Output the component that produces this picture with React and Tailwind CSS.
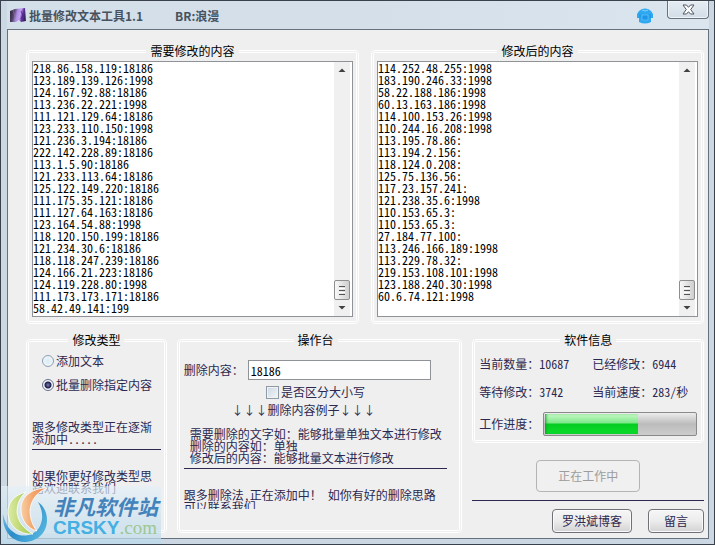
import React, { useState } from 'react';

const sourceLines = [
  '218.86.158.119:18186',
  '123.189.139.126:1998',
  '124.167.92.88:18186',
  '113.236.22.221:1998',
  '111.121.129.64:18186',
  '123.233.110.150:1998',
  '121.236.3.194:18186',
  '222.142.228.89:18186',
  '113.1.5.90:18186',
  '121.233.113.64:18186',
  '125.122.149.220:18186',
  '111.175.35.121:18186',
  '111.127.64.163:18186',
  '123.164.54.88:1998',
  '118.120.150.199:18186',
  '121.234.30.6:18186',
  '118.118.247.239:18186',
  '124.166.21.223:18186',
  '124.119.228.80:1998',
  '111.173.173.171:18186',
  '58.42.49.141:199',
];

const resultLines = [
  '114.252.48.255:1998',
  '183.190.246.33:1998',
  '58.22.188.186:1998',
  '60.13.163.186:1998',
  '114.100.153.26:1998',
  '110.244.16.208:1998',
  '113.195.78.86:',
  '113.194.2.156:',
  '118.124.0.208:',
  '125.75.136.56:',
  '117.23.157.241:',
  '121.238.35.6:1998',
  '110.153.65.3:',
  '110.153.65.3:',
  '27.184.77.100:',
  '113.246.166.189:1998',
  '113.229.78.32:',
  '219.153.108.101:1998',
  '123.188.240.30:1998',
  '60.6.74.121:1998',
];

const GroupBox = ({ title, className = '', children }) => (
  <fieldset className={`min-w-0 rounded-sm border-3 border-double border-white ${className}`}>
    <legend className="mx-auto px-1 leading-4 text-black">{title}</legend>
    {children}
  </fieldset>
);

const ScrollBar = () => (
  <div className="flex w-4 flex-col items-center bg-[#f0f0f0]">
    <svg className="h-4 w-4" viewBox="0 0 16 16">
      <path d="M4.5 10 8 6.5 11.5 10Z" fill="#404040" />
    </svg>
    <div className="flex-1" />
    <div className="flex h-5 w-4 flex-col items-center justify-center gap-px rounded-xs border border-[#8e8e8e] bg-linear-to-r from-[#f8f8f8] to-[#cfcfcf]">
      <span className="h-px w-1.5 bg-[#555]" />
      <span className="h-px w-1.5 bg-white" />
      <span className="h-px w-1.5 bg-[#555]" />
      <span className="h-px w-1.5 bg-white" />
      <span className="h-px w-1.5 bg-[#555]" />
    </div>
    <svg className="h-4 w-4" viewBox="0 0 16 16">
      <path d="M4.5 6 8 9.5 11.5 6Z" fill="#404040" />
    </svg>
  </div>
);

const TextPane = ({ title, lines }) => {
  const [text, setText] = useState(lines.join('\n'));

  return (
    <GroupBox title={title} className="px-[3px] pt-0.5 pb-1">
      <div className="flex h-64 border border-[#8f9296] bg-white pr-0.5">
        <textarea
          aria-label={title}
          value={text}
          onChange={(e) => setText(e.target.value)}
          spellCheck={false}
          className="min-w-0 flex-1 resize-none overflow-hidden leading-3 text-black outline-none"
        />
        <ScrollBar />
      </div>
    </GroupBox>
  );
};

const TypeOption = ({ label, checked, onChange }) => (
  <label className="flex h-6 items-center gap-0.5">
    <input
      type="radio"
      name="edit-type"
      checked={checked}
      onChange={onChange}
      className="h-3 w-3 appearance-none rounded-full border border-[#8aa0b4] bg-[radial-gradient(circle,#dcecf5,#f4f8fa)] checked:border-[#68708c] checked:bg-[radial-gradient(circle,#7a80b0_0,#1c1c4c_3px,#f4f6fa_4px)]"
    />
    {label}
  </label>
);

const Stat = ({ label, value }) => (
  <div className="flex">
    <dt>{label}</dt>
    <dd>{value}</dd>
  </div>
);

const ToolButton = ({ children, className }) => (
  <button
    type="button"
    className={`h-6 rounded-sm border border-[#707078] bg-linear-to-b from-[#f6f6f6] via-[#ececec] via-50% to-[#d2d2d4] shadow-[inset_0_0_0_1px_#fafafa] ${className}`}
  >
    {children}
  </button>
);

const TitleBar = () => (
  <header className="relative flex h-7 items-center bg-linear-to-r from-[#d3dfe9] via-[#d5dfea] to-[#dbe5ee] pt-0.5 pr-14 pl-[3px] font-bold text-[#46535f] [font-feature-settings:normal]">
    <svg className="h-4 w-4" viewBox="0 0 16 16">
      <defs>
        <linearGradient id="app-icon" x1="0" y1="0" x2="1" y2="0.2">
          <stop offset="0" stopColor="#2c2438" />
          <stop offset="0.3" stopColor="#54436b" />
          <stop offset="0.5" stopColor="#a98be0" />
          <stop offset="0.7" stopColor="#c4a4f0" />
          <stop offset="0.85" stopColor="#6a35a8" />
          <stop offset="1" stopColor="#3d2460" />
        </linearGradient>
      </defs>
      <path d="M0 3 5 1 15 0 16 13 11 14 9 12 6 14 0 14Z" fill="url(#app-icon)" />
      <path d="M3 2 5 9 4 14" fill="none" stroke="#8d7aa8" opacity="0.6" />
      <path d="M11 3 13 7 11 11" fill="none" stroke="#4a1f86" strokeWidth="1.5" opacity="0.6" />
    </svg>
    <h1 className="ml-[3px]">批量修改文本工具1.1</h1>
    <span className="ml-8">BR:浪漫</span>
    <button type="button" aria-label="换肤" className="ml-auto">
      <svg className="h-4 w-4" viewBox="0 0 16 16">
        <path d="M5 1Q8 0 11 1L14 3 16 6V10H14V14Q8 17 2 14V10H0V6L2 3Z" fill="#2fa8f2" />
        <path d="M5 2Q8 4 11 2" fill="none" stroke="#7fd0fa" />
        <path d="M5 7H11V12H5Z" fill="#1f95ea" stroke="#62c4f8" strokeWidth="0.7" />
        <path d="M3 6V10M13 6V10" stroke="#1b8ade" strokeWidth="0.8" />
      </svg>
    </button>
    <button
      type="button"
      aria-label="关闭"
      className="absolute top-0 right-0 flex h-[18px] w-[42px] items-center justify-center rounded-b-sm border border-t-0 border-[#69727c] bg-linear-to-b from-[#e6edf3] to-[#d3dde7] shadow-[inset_0_0_0_1px_#eff4f8]"
    >
      <svg className="h-[11px] w-[13px]" viewBox="0 0 13 11">
        <path d="M1 1H4.5L6.5 3.3 8.5 1H12L8.7 5.5 12 10H8.5L6.5 7.7 4.5 10H1L4.3 5.5Z" fill="#fff" stroke="#4d5560" />
      </svg>
    </button>
  </header>
);

const SiteBadge = () => (
  <div className="pointer-events-none absolute bottom-0 left-0 flex h-[58px] w-40 items-center bg-linear-to-b from-[#e4f0f8]/65 to-[#bcd9ea]/75">
    <svg className="h-[58px] w-12 shrink-0" viewBox="0 0 48 58">
      <defs>
        <linearGradient id="swoosh-blue" x1="0" y1="0" x2="1" y2="0.6">
          <stop offset="0" stopColor="#8fd0e6" />
          <stop offset="0.5" stopColor="#2a8cc8" />
          <stop offset="1" stopColor="#52b2de" />
        </linearGradient>
        <linearGradient id="swoosh-green" x1="0" y1="0" x2="1" y2="0">
          <stop offset="0" stopColor="#dcebaa" />
          <stop offset="0.45" stopColor="#c3da76" />
          <stop offset="1" stopColor="#9cc75a" />
        </linearGradient>
        <linearGradient id="swoosh-orange" x1="0" y1="0" x2="1" y2="0">
          <stop offset="0" stopColor="#f8cfa4" />
          <stop offset="0.45" stopColor="#f3a66c" />
          <stop offset="1" stopColor="#ec8a50" />
        </linearGradient>
      </defs>
      <path d="M2 28C1 43 9 55 23 56 37 56 46 46 46 34 46 27 43 20 37 16 41 23 43 32 39 40 35 48 26 51 18 49 9 46 4 38 2 28Z" fill="url(#swoosh-blue)" />
      <path d="M25 6C13 9 6 17 7 28 8 40 18 49 32 48 23 43 17 36 16 26 16 18 19 11 25 6Z" fill="url(#swoosh-green)" stroke="#fff" strokeWidth="0.8" />
      <path d="M46 2C31 2 19 11 20 24 20 34 27 43 36 45 31 39 29 32 29 24 30 14 36 6 46 2Z" fill="url(#swoosh-orange)" stroke="#fff" strokeWidth="0.8" />
    </svg>
    <div className="ml-1 pt-0.5 whitespace-nowrap">
      <p className="text-[21px] leading-6 font-bold text-[#4382bb] italic">非凡软件站</p>
      <p className="font-['Liberation_Sans',sans-serif] text-[19px] leading-5 font-bold text-[#45afe2]">
        CRSKY
        <span className="font-['Liberation_Serif',serif] font-normal text-[#9dc793]">.com</span>
      </p>
    </div>
  </div>
);

const App = () => {
  const [editType, setEditType] = useState('remove');
  const [keyword, setKeyword] = useState('18186');
  const [matchCase, setMatchCase] = useState(false);
  const progress = 62;

  return (
    <div className="relative flex min-h-screen flex-col border-t border-r border-b-2 border-l border-[#39424c] bg-[#cbd8e3] font-['Noto_Sans_CJK_SC',sans-serif] text-[12px] leading-4 text-[#2c2850] [font-feature-settings:'hwid']">
      <div className="mr-[5px] mb-[5px] ml-1.5 flex flex-1 flex-col">
        <TitleBar />
        <main className="flex flex-1 flex-col gap-2 border border-[#66717d] bg-[#efefef] pt-[13px] pr-1 pb-[5px] pl-[18px]">
          <div className="grid grid-cols-2 gap-3">
            <TextPane title="需要修改的内容" lines={sourceLines} />
            <TextPane title="修改后的内容" lines={resultLines} />
          </div>

          <div className="grid flex-1 grid-cols-[141fr_286fr_232fr] gap-2.5">
            {/* Edit type */}
            <GroupBox title="修改类型" className="px-[3px] pt-px">
              <div className="pl-2.5">
                <TypeOption label="添加文本" checked={editType === 'add'} onChange={() => setEditType('add')} />
                <TypeOption label="批量删除指定内容" checked={editType === 'remove'} onChange={() => setEditType('remove')} />
              </div>
              <p className="mt-6 leading-3">
                跟多修改类型正在逐渐
                <br />
                添加中.....
              </p>
              <hr className="mt-1 border-[#2c2850]" />
              <p className="mt-5 leading-3">
                如果你更好修改类型思
                <br />
                路欢迎联系我们
              </p>
            </GroupBox>

            {/* Operation panel */}
            <GroupBox title="操作台" className="pt-3 pr-3 pl-1">
              <div className="flex items-center">
                <label htmlFor="keyword" className="whitespace-nowrap">删除内容：</label>
                <input
                  id="keyword"
                  type="text"
                  value={keyword}
                  onChange={(e) => setKeyword(e.target.value)}
                  className="mr-4 ml-1 h-5 min-w-0 flex-1 border border-[#8f9296] bg-white px-0.5 text-black outline-none"
                />
              </div>
              <label className="mt-1 flex h-4 items-center justify-center gap-0.5">
                <input
                  type="checkbox"
                  checked={matchCase}
                  onChange={(e) => setMatchCase(e.target.checked)}
                  className="h-[13px] w-[13px] appearance-none border border-[#8e9aa6] bg-linear-to-br from-[#ccd8e2] to-[#f2f6f9] shadow-[inset_0_0_0_1px_#f2f2f2] checked:bg-[#2c2850]"
                />
                是否区分大小写
              </label>
              <p className="mt-0.5 pr-6 text-center">↓↓↓删除内容例子↓↓↓</p>
              <p className="mt-2.5 pl-1.5 leading-3 whitespace-nowrap">
                需要删除的文字如：能够批量单独文本进行修改
                <br />
                删除的内容如：单独
                <br />
                修改后的内容：能够批量文本进行修改
              </p>
              <hr className="mt-1 border-[#2c2850]" />
              <p className="mt-5 h-5 overflow-hidden leading-3 whitespace-nowrap">
                跟多删除法，正在添加中！ 如你有好的删除思路
                <br />
                可以联系我们
              </p>
            </GroupBox>

            {/* Software info */}
            <div className="flex min-w-0 flex-col">
              <GroupBox title="软件信息" className="px-1 pt-2 pb-1">
                <dl className="grid grid-cols-2 gap-x-2 gap-y-3">
                  <Stat label="当前数量：" value="10687" />
                  <Stat label="已经修改：" value="6944" />
                  <Stat label="等待修改：" value="3742" />
                  <Stat label="当前速度：" value="283/秒" />
                </dl>
                <div className="mt-3 flex items-center">
                  <span id="progress-label" className="whitespace-nowrap">工作进度：</span>
                  <div
                    role="progressbar"
                    aria-labelledby="progress-label"
                    aria-valuenow={progress}
                    className="ml-1 h-6 flex-1 rounded-xs border border-[#8a8a8a] bg-linear-to-b from-[#ececec] via-[#bcbcbc] via-50% to-[#cdcdcd] p-px"
                  >
                    <div
                      className="h-full bg-[linear-gradient(to_bottom,#c8f8c8_0%,#7ce888_45%,#04cc20_50%,#0cdc2c_100%)] shadow-[inset_2px_0_3px_-1px_#0a9c1e]"
                      style={{ width: `${progress}%` }}
                    />
                  </div>
                </div>
              </GroupBox>
              <button
                type="button"
                disabled
                className="mt-[17px] h-8 w-[104px] self-center rounded-sm border border-[#b4b4b4] bg-[#f0f0f0] text-[#9c9c9c]"
              >
                正在工作中
              </button>
              <hr className="mt-2 border-[#2c2850]" />
              <div className="mt-2 flex justify-end gap-4">
                <ToolButton className="w-20">罗洪斌博客</ToolButton>
                <ToolButton className="w-14">留言</ToolButton>
              </div>
            </div>
          </div>
        </main>
      </div>
      <SiteBadge />
    </div>
  );
};

export default App;
